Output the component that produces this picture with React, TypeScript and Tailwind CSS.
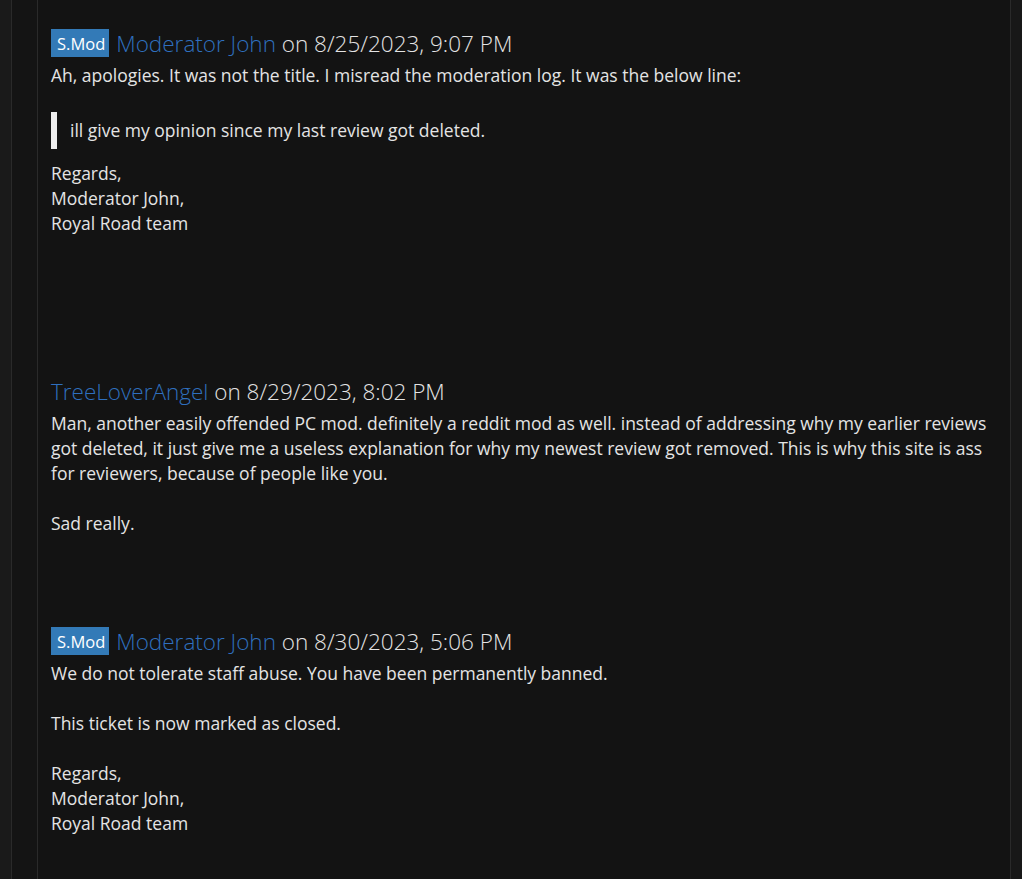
export default function App() {
  const badge = (
    <span className="inline-block h-[28px] bg-[#337ab7] pl-[6px] pr-[4px] pt-[2px] text-[16.5px] font-normal leading-[26px] text-white">
      S.Mod
    </span>
  );

  return (
    <div
      className="flex min-h-[879px] w-full bg-[#131313] text-[17.5px] leading-[25px] text-[#e4e4e4]"
      style={{ fontFamily: '"Open Sans", "Liberation Sans", sans-serif' }}
    >
      <div className="w-[12px] shrink-0 border-r border-[#2a2a2a] bg-[#1a1a1a]" />
      <div className="w-[26px] shrink-0 border-r border-[#2a2a2a] bg-[#141414]" />
      <div className="flex-1 border-r border-[#2a2a2a] pl-[13px] pr-[14px] pt-[27px]">
        {/* message 1 */}
        <div className="pb-[139px]">
          <div className="flex h-[32px] items-center gap-[7px] text-[22.5px] font-light">
            {badge}
            <span>
              <span className="text-[#2f6fbe]">Moderator John</span> on 8/25/2023, 9:07 PM
            </span>
          </div>
          <div className="mt-[4px]">
            <p>Ah, apologies. It was not the title. I misread the moderation log. It was the below line:</p>
            <blockquote className="mb-[12px] mt-[24px] border-l-[6px] border-[#eeeeee] py-[6px] pl-[13px]">
              ill give my opinion since my last review got deleted.
            </blockquote>
            <p>
              Regards,
              <br />
              Moderator John,
              <br />
              Royal Road team
            </p>
          </div>
        </div>

        {/* message 2 */}
        <div className="pb-[89px]">
          <div className="flex h-[32px] items-center text-[22.5px] font-light">
            <span>
              <span className="text-[#2f6fbe]">TreeLoverAngel</span> on 8/29/2023, 8:02 PM
            </span>
          </div>
          <div className="mt-[4px]">
            <p>
              Man, another easily offended PC mod. definitely a reddit mod as well. instead of addressing why my
              earlier reviews got deleted, it just give me a useless explanation for why my newest review got
              removed. This is why this site is ass for reviewers, because of people like you.
            </p>
            <p className="mt-[25px]">Sad really.</p>
          </div>
        </div>

        {/* message 3 */}
        <div className="pb-[40px]">
          <div className="flex h-[32px] items-center gap-[7px] text-[22.5px] font-light">
            {badge}
            <span>
              <span className="text-[#2f6fbe]">Moderator John</span> on 8/30/2023, 5:06 PM
            </span>
          </div>
          <div className="mt-[4px]">
            <p>We do not tolerate staff abuse. You have been permanently banned.</p>
            <p className="mt-[25px]">This ticket is now marked as closed.</p>
            <p className="mt-[25px]">
              Regards,
              <br />
              Moderator John,
              <br />
              Royal Road team
            </p>
          </div>
        </div>
      </div>
      <div className="w-[11px] shrink-0 bg-[#181818]" />
    </div>
  );
}
